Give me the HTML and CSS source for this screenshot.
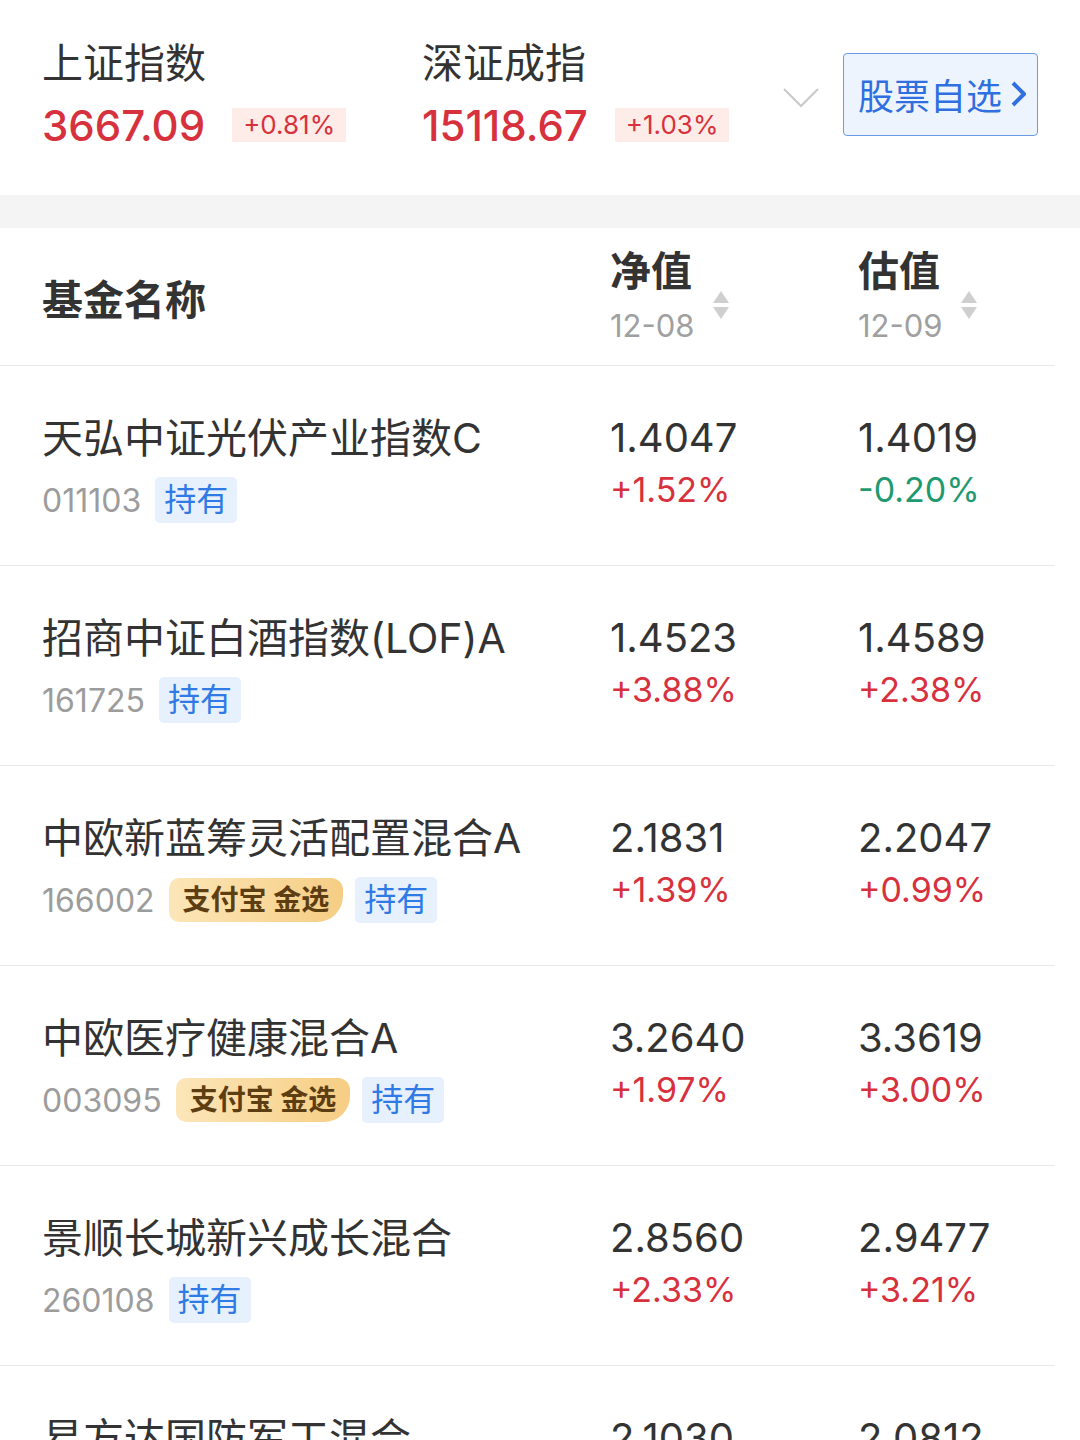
FILE: index.html
```html
<!DOCTYPE html>
<html lang="zh-CN">
  <head>
    <meta charset="UTF-8" />
    <meta name="viewport" content="width=device-width, initial-scale=1.0" />
    <title>基金估值</title>
    <link rel="stylesheet" href="styles.css">
  </head>
  <body>
    <header class="market">
      <div class="index first">
        <div class="index-name">上证指数</div>
        <div class="index-line">
          <span class="index-price">3667.09</span>
          <span class="index-change">+0.81%</span>
        </div>
      </div>
      <div class="index second">
        <div class="index-name">深证成指</div>
        <div class="index-line">
          <span class="index-price">15118.67</span>
          <span class="index-change">+1.03%</span>
        </div>
      </div>
      <svg class="expand" width="36" height="22" viewBox="0 0 36 22">
        <polyline points="1,2 18,19 35,2" fill="none" stroke="#c9c9c9" stroke-width="2" />
      </svg>
      <a class="stock-btn" href="#">
        股票自选
        <svg width="18" height="28" viewBox="0 0 18 28">
          <polyline points="3,3 14,14 3,25" fill="none" stroke="#2f6fe0" stroke-width="4" stroke-linejoin="round" />
        </svg>
      </a>
    </header>

    <div class="band"></div>

    <div class="table-head">
      <div class="head-name">基金名称</div>
      <div class="head-col">
        <div>
          <div class="head-title">净值</div>
          <div class="head-date">12-08</div>
        </div>
        <svg class="sort" width="16" height="30" viewBox="0 0 16 30">
          <polygon points="8,1 16,13 0,13" fill="#cfcfcf" />
          <polygon points="0,17 16,17 8,29" fill="#cfcfcf" />
        </svg>
      </div>
      <div class="head-col">
        <div>
          <div class="head-title">估值</div>
          <div class="head-date">12-09</div>
        </div>
        <svg class="sort" width="16" height="30" viewBox="0 0 16 30">
          <polygon points="8,1 16,13 0,13" fill="#cfcfcf" />
          <polygon points="0,17 16,17 8,29" fill="#cfcfcf" />
        </svg>
      </div>
    </div>

    <div class="fund">
      <div class="fund-info">
        <div class="fund-name">天弘中证光伏产业指数C</div>
        <div class="fund-meta">
          <span class="fund-code">011103</span>
          <span class="tag-hold">持有</span>
        </div>
      </div>
      <div class="val">
        <div class="num">1.4047</div>
        <div class="pct up">+1.52%</div>
      </div>
      <div class="val">
        <div class="num">1.4019</div>
        <div class="pct down">-0.20%</div>
      </div>
    </div>

    <div class="fund">
      <div class="fund-info">
        <div class="fund-name">招商中证白酒指数(LOF)A</div>
        <div class="fund-meta">
          <span class="fund-code">161725</span>
          <span class="tag-hold">持有</span>
        </div>
      </div>
      <div class="val">
        <div class="num">1.4523</div>
        <div class="pct up">+3.88%</div>
      </div>
      <div class="val">
        <div class="num">1.4589</div>
        <div class="pct up">+2.38%</div>
      </div>
    </div>

    <div class="fund">
      <div class="fund-info">
        <div class="fund-name">中欧新蓝筹灵活配置混合A</div>
        <div class="fund-meta">
          <span class="fund-code">166002</span>
          <span class="tag-alipay">支付宝 金选</span>
          <span class="tag-hold">持有</span>
        </div>
      </div>
      <div class="val">
        <div class="num">2.1831</div>
        <div class="pct up">+1.39%</div>
      </div>
      <div class="val">
        <div class="num">2.2047</div>
        <div class="pct up">+0.99%</div>
      </div>
    </div>

    <div class="fund">
      <div class="fund-info">
        <div class="fund-name">中欧医疗健康混合A</div>
        <div class="fund-meta">
          <span class="fund-code">003095</span>
          <span class="tag-alipay">支付宝 金选</span>
          <span class="tag-hold">持有</span>
        </div>
      </div>
      <div class="val">
        <div class="num">3.2640</div>
        <div class="pct up">+1.97%</div>
      </div>
      <div class="val">
        <div class="num">3.3619</div>
        <div class="pct up">+3.00%</div>
      </div>
    </div>

    <div class="fund">
      <div class="fund-info">
        <div class="fund-name">景顺长城新兴成长混合</div>
        <div class="fund-meta">
          <span class="fund-code">260108</span>
          <span class="tag-hold">持有</span>
        </div>
      </div>
      <div class="val">
        <div class="num">2.8560</div>
        <div class="pct up">+2.33%</div>
      </div>
      <div class="val">
        <div class="num">2.9477</div>
        <div class="pct up">+3.21%</div>
      </div>
    </div>

    <div class="fund">
      <div class="fund-info">
        <div class="fund-name">易方达国防军工混合</div>
        <div class="fund-meta">
          <span class="fund-code">001475</span>
          <span class="tag-hold">持有</span>
        </div>
      </div>
      <div class="val">
        <div class="num">2.1030</div>
        <div class="pct up">+1.05%</div>
      </div>
      <div class="val">
        <div class="num">2.0812</div>
        <div class="pct down">-1.04%</div>
      </div>
    </div>
  </body>
</html>
```

FILE: styles.css
```css
body {
  margin: 0;
  padding: 0;
  background-color: #fff;
  color: #333;
  font-family: Inter, "Noto Sans CJK SC", sans-serif;
}

/* top market bar */
.market {
  display: flex;
  align-items: center;
  padding: 38px 42px 45px 42px;
}

.index.first {
  width: 380px;
}

.index.second {
  width: 361px;
}

.index-name {
  font-size: 41px;
  line-height: 50px;
  color: #333;
}

.index-line {
  display: flex;
  align-items: center;
  margin-top: 12px;
  height: 50px;
}

.index-price {
  font-size: 42px;
  font-weight: 500;
  color: #d8313e;
}

.index-change {
  margin-left: 27px;
  padding: 0 11px;
  height: 34px;
  line-height: 34px;
  font-size: 26px;
  color: #d8313e;
  background-color: #fdece8;
}

.expand {
  margin-top: 8px;
  margin-right: 24px;
}

.stock-btn {
  display: flex;
  align-items: center;
  box-sizing: border-box;
  width: 195px;
  height: 83px;
  padding-left: 14px;
  gap: 8px;
  border: 1.5px solid #6b9ae6;
  border-radius: 4px;
  background-color: #eef4fe;
  color: #2f6fe0;
  font-size: 36px;
  text-decoration: none;
}

.band {
  height: 33px;
  background-color: #f4f4f4;
}

/* table */
.table-head,
.fund {
  display: grid;
  grid-template-columns: 610px 248px 1fr;
  margin-right: 25px;
  border-bottom: 1px solid #e9e9e9;
}

.table-head {
  height: 137px;
  align-items: center;
}

.head-name {
  padding-left: 42px;
  font-size: 41px;
  font-weight: 700;
}

.head-col {
  display: flex;
  align-items: center;
  gap: 18px;
}

.head-title {
  font-size: 41px;
  font-weight: 700;
  line-height: 46px;
}

.head-date {
  margin-top: 12px;
  font-size: 31px;
  line-height: 40px;
  color: #a0a0a0;
}

.sort {
  margin-top: 16px;
}

.fund {
  height: 200px;
  box-sizing: border-box;
  padding-top: 46px;
  align-items: start;
}

.fund-info {
  padding-left: 42px;
}

.fund-name {
  font-size: 41px;
  line-height: 52px;
  white-space: nowrap;
}

.fund-meta {
  display: flex;
  align-items: center;
  margin-top: 13px;
  height: 46px;
}

.fund-code {
  font-size: 32px;
  color: #9c9c9c;
  margin-right: 14px;
}

.tag-hold {
  display: inline-block;
  height: 46px;
  line-height: 46px;
  padding: 0 9px;
  border-radius: 5px;
  background-color: #e7f0fd;
  color: #2f7ae5;
  font-size: 32px;
}

.tag-alipay {
  display: inline-block;
  height: 44px;
  line-height: 44px;
  padding: 0 14px;
  margin-right: 12px;
  border-radius: 10px 12px 26px 10px;
  background: linear-gradient(90deg, #fce6b8, #f6cd84);
  color: #5d3d12;
  font-size: 28px;
  font-weight: 700;
  white-space: nowrap;
}

.num {
  font-size: 40px;
  line-height: 52px;
  color: #333;
}

.pct {
  font-size: 34px;
  line-height: 52px;
}

.up {
  color: #d8313e;
}

.down {
  color: #1f9a70;
}
```
